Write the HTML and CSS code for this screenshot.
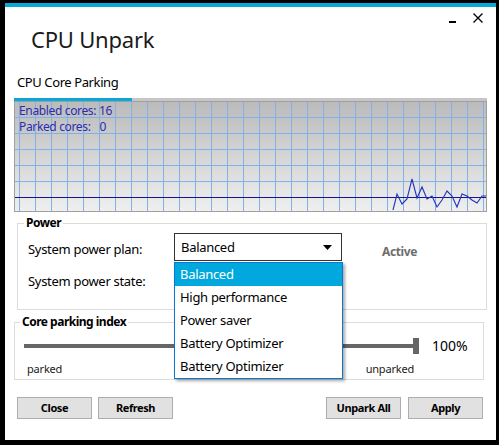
FILE: index.html
```html
<!DOCTYPE html>
<html>
<head>
<meta charset="utf-8">
<title>CPU Unpark</title>
<link rel="stylesheet" href="styles.css">
</head>
<body>
<div class="window">
  <div class="controls">
    <span class="min"></span>
    <svg class="close" width="10" height="10" viewBox="0 0 10 10"><path d="M0.5 0.5 L9.5 9.5 M9.5 0.5 L0.5 9.5" stroke="#000" stroke-width="1.3" fill="none"/></svg>
  </div>
  <div class="title">CPU Unpark</div>
  <div class="tabs">
    <div class="tab">CPU Core Parking</div>
    <div class="tab-fill"></div>
  </div>
  <div class="graph">
    <svg class="plot" width="471" height="109" viewBox="15 102 471 109">
      <defs>
        <pattern id="grid" x="19" y="117" width="16" height="16" patternUnits="userSpaceOnUse">
          <path d="M0.5 0 V16 M0 0.5 H16" stroke="#80b2ea" stroke-width="1" fill="none"/>
        </pattern>
      </defs>
      <rect x="15" y="102" width="471" height="109" fill="url(#grid)"/>
      <line x1="15" y1="197.5" x2="486" y2="197.5" stroke="#14148c" stroke-width="1.2"/>
      <polyline fill="none" stroke="#2233bb" stroke-width="1.1" points="393,210 397,194 402,204 407,199 412,179 417,198 422,187 427,199 432,196 437,207 442,200 447,191 452,196 457,207 462,194 467,196 472,200 477,203 482,196 486,196"/>
    </svg>
    <div class="stats"><div>Enabled cores: 16</div><div>Parked cores:<span class="gap">0</span></div></div>
  </div>
  <fieldset class="group power">
    <legend>Power</legend>
    <div class="power-grid">
      <div class="label">System power plan:</div>
      <div class="combo">
        <span>Balanced</span>
        <svg class="arrow" width="9" height="5" viewBox="0 0 9 5"><polygon points="0,0 9,0 4.5,5" fill="#000"/></svg>
        <ul class="list">
          <li class="sel">Balanced</li>
          <li>High performance</li>
          <li>Power saver</li>
          <li>Battery Optimizer</li>
          <li>Battery Optimizer</li>
        </ul>
      </div>
      <div class="status">Active</div>
      <div class="label">System power state:</div>
    </div>
  </fieldset>
  <fieldset class="group core">
    <legend>Core parking index</legend>
    <div class="core-grid">
      <div class="slider"><div class="track"></div><div class="thumb"></div></div>
      <div class="pct">100%</div>
      <div class="scale"><span>parked</span><span>unparked</span></div>
    </div>
  </fieldset>
  <div class="buttons">
    <button class="btn">Close</button>
    <button class="btn">Refresh</button>
    <div class="spacer"></div>
    <button class="btn">Unpark All</button>
    <button class="btn apply">Apply</button>
  </div>
</div>
</body>
</html>
```

FILE: styles.css
```css
* { box-sizing: border-box; }
html, body { margin: 0; padding: 0; }
body {
  background: #000;
  width: 499px;
  height: 445px;
  overflow: hidden;
  font-family: "Noto Sans", "Open Sans", sans-serif;
  color: #000;
}
.window {
  margin: 3px 0 0 5px;
  width: 491px;
  height: 437px;
  background: #fff;
  border-top: 4px solid #09a8dc;
  display: flex;
  flex-direction: column;
}
.controls {
  display: flex;
  justify-content: flex-end;
  align-items: flex-end;
  gap: 17px;
  height: 16px;
  padding: 6px 13px 0 0;
}
.min { width: 7px; height: 2px; background: #000; }
.close { display: block; }
.title {
  margin: 5px 0 0 26px;
  font-size: 22px;
  line-height: 22px;
  letter-spacing: -0.2px;
  color: #1a1a1a;
}
.tabs { display: flex; margin: 24px 9px 0 9px; }
.tab {
  width: 118px;
  padding: 0 0 8px 3px;
  font-size: 13px;
  line-height: 16px;
  letter-spacing: -0.4px;
  border-bottom: 3px solid #09a8dc;
}
.tab-fill { flex: 1; border-bottom: 3px solid #c6c6c6; }
.graph {
  position: relative;
  margin: 0 9px;
  height: 111px;
  border: 1px solid #a0a0a0;
  background: linear-gradient(#bbbbbb, #efefef);
}
.plot { display: block; }
.stats {
  position: absolute;
  left: 4px;
  top: 1px;
  font-size: 12px;
  line-height: 16px;
  letter-spacing: -0.35px;
  color: #2c2cae;
  white-space: nowrap;
}
.stats .gap { margin-left: 9px; }
.group {
  border: 1px solid #dcdcdc;
  padding: 0;
  min-width: 0;
}
.group legend {
  font-weight: 700;
  font-size: 12px;
  line-height: 16px;
  letter-spacing: -0.5px;
  padding: 0 2px;
}
.power { margin: 3px 9px 0 12px; }
.power legend { margin-left: 6px; }
.power-grid {
  display: grid;
  grid-template-columns: 146px 168px auto;
  grid-template-rows: 28px 28px;
  row-gap: 4px;
  padding: 2px 0 16px 10px;
}
.label {
  align-self: center;
  padding-top: 3px;
  font-size: 13px;
  line-height: 18px;
  letter-spacing: -0.3px;
}
.combo {
  position: relative;
  border: 1px solid #333;
  display: flex;
  align-items: center;
  justify-content: space-between;
  padding: 0 9px 0 6px;
  font-size: 13px;
  letter-spacing: -0.3px;
}
.arrow { display: block; }
.list {
  position: absolute;
  left: -1px;
  top: calc(100% + 2px);
  width: 169px;
  margin: 0;
  padding: 0;
  list-style: none;
  background: #fff;
  border: 1px solid #0a78d2;
  box-shadow: 2px 2px 3px rgba(0, 0, 0, 0.35);
  z-index: 10;
}
.list li {
  height: 23px;
  line-height: 23px;
  padding-left: 5px;
}
.list li.sel { background: #00a8dd; color: #fff; }
.status {
  align-self: start;
  padding: 11px 0 0 40px;
  font-weight: 700;
  font-size: 12px;
  line-height: 16px;
  letter-spacing: -0.4px;
  color: #6d6d6d;
}
.core { margin: 4px 12px 0 9px; }
.core legend { margin-left: 5px; }
.core-grid {
  display: grid;
  grid-template-columns: 395px auto;
  row-gap: 8px;
  align-items: center;
  padding: 8px 0 3px 9px;
}
.slider { height: 16px; display: flex; align-items: center; }
.track { flex: 1; height: 4px; background: #666; }
.thumb { width: 6px; height: 16px; background: #666; }
.pct { font-size: 14px; line-height: 16px; padding-left: 13px; }
.scale {
  display: flex;
  justify-content: space-between;
  padding: 0 5px 0 3px;
  font-size: 11px;
  line-height: 14px;
  letter-spacing: -0.2px;
  color: #1a1a1a;
}
.buttons {
  display: flex;
  gap: 6px;
  margin-top: 17px;
  padding: 0 13px 0 12px;
}
.spacer { flex: 1; }
.btn {
  width: 75px;
  height: 22px;
  margin: 0;
  padding: 0;
  background: #e1e1e1;
  border: 1px solid #adadad;
  font-family: "Noto Sans", "Open Sans", sans-serif;
  font-weight: 700;
  font-size: 11px;
  line-height: 20px;
  letter-spacing: -0.4px;
  color: #000;
  text-align: center;
}
.apply { margin-left: 1px; }
```
